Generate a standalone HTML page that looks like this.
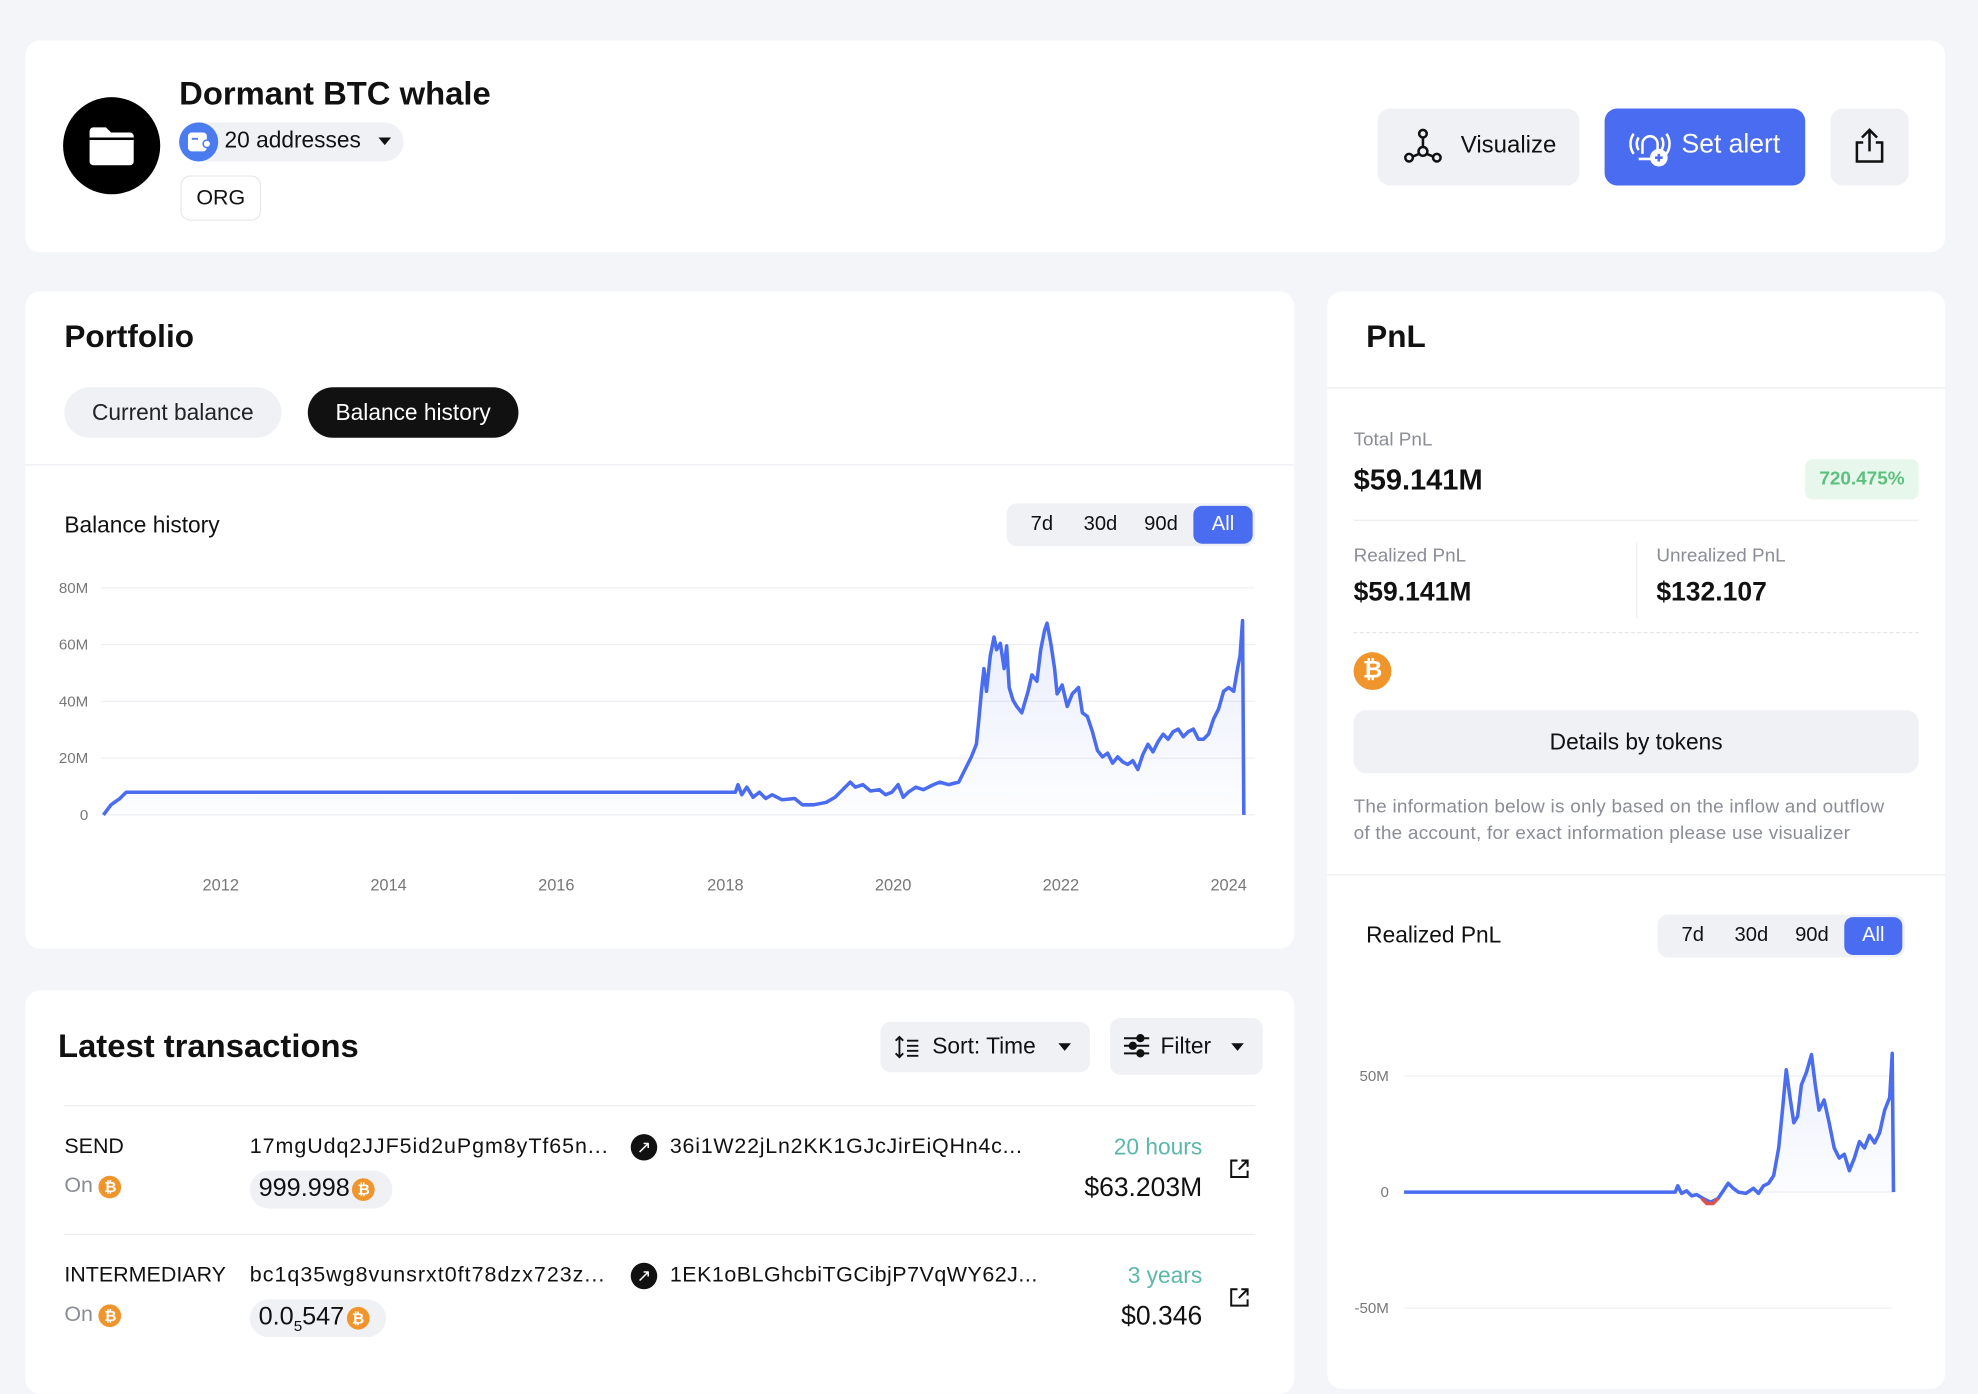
<!DOCTYPE html>
<html><head><meta charset="utf-8"><style>
*{box-sizing:border-box;margin:0;padding:0}
html,body{width:1978px;height:1360px;overflow:hidden;background:#f4f5f9;font-family:"Liberation Sans",sans-serif;color:#111}
#w{position:absolute;left:0;top:0;width:1568px;height:1078px;transform:scale(1.26148);transform-origin:0 0}
.a{position:absolute}
.card{position:absolute;background:#fff;border-radius:12px}
.btn{position:absolute;background:#f0f1f5;border-radius:10px}
.t{position:absolute;white-space:nowrap}
.btc{display:inline-block;width:18px;height:18px;border-radius:50%;background:#f0952c;color:#fff;font-size:12px;font-weight:bold;text-align:center;line-height:18px;vertical-align:middle}
.seg{position:absolute;background:#f0f1f5;border-radius:8px;height:34px;font-size:16px}
.seg span{position:absolute;top:8px}
.seg .on{position:absolute;top:2px;height:30px;background:#4a6cf0;border-radius:7px;color:#fff;text-align:center;line-height:30px}
.gray{color:#8a8d95}
.addr{letter-spacing:0.6px}
</style></head><body><div id="w">

<!-- header card -->
<div class="card" style="left:20px;top:32px;width:1522px;height:168px"></div>
<div class="a" style="left:50px;top:77px;width:77px;height:77px;border-radius:50%;background:#000"></div>
<svg class="a" style="left:70px;top:99px" width="37" height="33" viewBox="0 0 37 33"><path d="M4 2h10l4 4h15a3 3 0 0 1 3 3v20a3 3 0 0 1-3 3H4a3 3 0 0 1-3-3V5a3 3 0 0 1 3-3z" fill="#fff"/><rect x="1" y="10" width="35" height="2" fill="#000"/></svg>
<div class="t" style="left:142px;top:59px;font-size:26px;font-weight:bold">Dormant BTC whale</div>
<div class="a" style="left:142px;top:97px;width:178px;height:31px;border-radius:16px;background:#f0f1f5"></div>
<div class="a" style="left:142px;top:97px;width:31px;height:31px;border-radius:50%;background:#4a7cf0"></div>
<svg class="a" style="left:148px;top:104px" width="20" height="17" viewBox="0 0 20 17"><rect x="1" y="1" width="15" height="15" rx="3" fill="#fff"/><path d="M4 6h5" stroke="#4a7cf0" stroke-width="1.5"/><circle cx="16" cy="10" r="3" fill="#fff" stroke="#4a7cf0" stroke-width="1.2"/></svg>
<div class="t" style="left:178px;top:101px;font-size:18px">20 addresses</div>
<div class="a" style="left:300px;top:109px;border-left:5px solid transparent;border-right:5px solid transparent;border-top:6px solid #111"></div>
<div class="a" style="left:143px;top:139px;width:64px;height:36px;border:1px solid #e8e9ed;border-radius:8px;font-size:17px;text-align:center;line-height:34px">ORG</div>

<div class="btn" style="left:1092px;top:86px;width:160px;height:61px"></div>
<svg class="a" style="left:1112px;top:101px" width="32" height="30" viewBox="0 0 32 30" fill="none" stroke="#111" stroke-width="2"><circle cx="16" cy="5" r="3"/><circle cx="5" cy="24" r="3"/><circle cx="27" cy="24" r="3"/><circle cx="16" cy="19" r="3.5"/><path d="M16 8v7.5M13 21l-5 2M19 21l5 2"/></svg>
<div class="t" style="left:1158px;top:105px;font-size:19px">Visualize</div>
<div class="a" style="left:1272px;top:86px;width:159px;height:61px;border-radius:10px;background:#4a6cf0"></div>
<svg class="a" style="left:1290px;top:100px" width="36" height="34" viewBox="0 0 36 34" fill="none" stroke="#fff" stroke-width="2"><path d="M5 6a14 14 0 0 0 0 16M9 9a9 9 0 0 0 0 10M31 6a14 14 0 0 1 0 16M27 9a9 9 0 0 1 0 10"/><path d="M12 22v-8a6 6 0 0 1 12 0v6"/><path d="M9 26h10"/><circle cx="25" cy="25" r="6" fill="#fff"/><path d="M25 22v6M22 25h6" stroke="#4a6cf0"/></svg>
<div class="t" style="left:1333px;top:103px;font-size:21px;color:#fff">Set alert</div>
<div class="btn" style="left:1451px;top:86px;width:62px;height:61px"></div>
<svg class="a" style="left:1468px;top:101px" width="28" height="30" viewBox="0 0 28 30" fill="none" stroke="#111" stroke-width="2"><path d="M14 2v17M8 8l6-6 6 6"/><path d="M9 12H4v15h20V12h-5"/></svg>

<!-- portfolio card -->
<div class="card" style="left:20px;top:231px;width:1006px;height:521px"></div>
<div class="t" style="left:51px;top:253px;font-size:25px;font-weight:bold">Portfolio</div>
<div class="a" style="left:51px;top:307px;width:172px;height:40px;border-radius:20px;background:#f0f1f5;font-size:18px;text-align:center;line-height:40px;color:#222">Current balance</div>
<div class="a" style="left:244px;top:307px;width:167px;height:40px;border-radius:20px;background:#111;font-size:18px;text-align:center;line-height:40px;color:#fff">Balance history</div>
<div class="a" style="left:20px;top:368px;width:1006px;height:1px;background:#eceef2"></div>
<div class="t" style="left:51px;top:406px;font-size:18px">Balance history</div>
<div class="seg" style="left:798px;top:399px;width:197px"><span style="left:19px">7d</span><span style="left:61px">30d</span><span style="left:109px">90d</span><div class="on" style="left:148px;width:47px">All</div></div>

<svg class="a" style="left:0;top:440px" width="1026" height="290" viewBox="0 440 1026 290">
<g stroke="#eef0f3" stroke-width="1"><path d="M80 466H995M80 511H995M80 556H995M80 601H995M80 646H995"/></g>
<g font-family="Liberation Sans" font-size="12" fill="#777" text-anchor="end"><text x="70" y="470">80M</text><text x="70" y="515">60M</text><text x="70" y="560">40M</text><text x="70" y="605">20M</text><text x="70" y="650">0</text></g>
<g font-family="Liberation Sans" font-size="13" fill="#777" text-anchor="middle"><text x="175" y="706">2012</text><text x="308" y="706">2014</text><text x="441" y="706">2016</text><text x="575" y="706">2018</text><text x="708" y="706">2020</text><text x="841" y="706">2022</text><text x="974" y="706">2024</text></g>
<defs><linearGradient id="g1" x1="0" y1="0" x2="0" y2="1"><stop offset="0" stop-color="#4a6cf0" stop-opacity="0.12"/><stop offset="1" stop-color="#4a6cf0" stop-opacity="0.01"/></linearGradient></defs>
<path d="M82 646L88 638L95 633L100 628L583 628L585 622L588 630L592 624L597 632L602 628L607 633L612 630L620 634L630 633L636 638L645 638L655 636L662 632L668 626L674 620L678 624L684 622L690 627L697 626L702 630L707 628L712 622L716 632L720 628L726 624L732 626L740 622L745 620L752 622L760 620L765 610L770 600L774 590L776 570L778 548L780 530L782 548L785 520L788 505L790 515L793 510L796 530L798 512L800 545L803 555L806 560L810 565L815 548L818 535L822 540L825 515L828 500L830 494L833 510L836 530L838 550L842 543L846 560L850 550L855 545L858 565L862 568L866 580L870 595L874 600L878 597L882 605L886 600L890 604L894 606L898 603L902 610L906 598L910 590L914 596L918 588L922 582L926 586L930 580L934 578L938 584L942 580L946 578L950 586L954 586L958 582L962 570L966 562L970 548L974 545L978 548L981 530L983 520L985 492L986 646" fill="url(#g1)" stroke="#4a6cf0" stroke-width="2.8" stroke-linejoin="round"/>
</svg>

<!-- transactions card -->
<div class="card" style="left:20px;top:785px;width:1006px;height:320px"></div>
<div class="t" style="left:46px;top:814px;font-size:26px;font-weight:bold">Latest transactions</div>
<div class="btn" style="left:698px;top:810px;width:166px;height:40px;border-radius:8px"></div>
<svg class="a" style="left:708px;top:820px" width="22" height="20" viewBox="0 0 22 20" fill="none" stroke="#111" stroke-width="1.8"><path d="M5 2v16M2 5l3-3 3 3M2 15l3 3 3-3M11 5h9M11 9h9M11 13h9M11 17h9" stroke-width="1.5"/></svg>
<div class="t" style="left:739px;top:819px;font-size:18px">Sort: Time</div>
<div class="a" style="left:839px;top:827px;border-left:5px solid transparent;border-right:5px solid transparent;border-top:6px solid #111"></div>
<div class="btn" style="left:880px;top:807px;width:121px;height:45px;border-radius:8px"></div>
<svg class="a" style="left:890px;top:819px" width="22" height="20" viewBox="0 0 22 20" stroke="#111" stroke-width="1.6"><path d="M1 4h20M1 10h20M1 16h20"/><circle cx="14" cy="4" r="2.5" fill="#111"/><circle cx="8" cy="10" r="2.5" fill="#111"/><circle cx="14" cy="16" r="2.5" fill="#111"/></svg>
<div class="t" style="left:920px;top:819px;font-size:18px">Filter</div>
<div class="a" style="left:976px;top:827px;border-left:5px solid transparent;border-right:5px solid transparent;border-top:6px solid #111"></div>

<div class="a" style="left:51px;top:876px;width:944px;height:1px;background:#eceef2"></div>
<div class="t" style="left:51px;top:899px;font-size:17px">SEND</div>
<div class="t gray" style="left:51px;top:930px;font-size:17px">On <span class="btc">₿</span></div>
<div class="t addr" style="left:198px;top:899px;font-size:17px;letter-spacing:0.75px">17mgUdq2JJF5id2uPgm8yTf65n...</div>
<div class="a" style="left:500px;top:899px;width:21px;height:21px;border-radius:50%;background:#111;color:#fff;font-size:14px;text-align:center;line-height:21px">↗</div>
<div class="t addr" style="left:531px;top:899px;font-size:17px">36i1W22jLn2KK1GJcJirEiQHn4c...</div>
<div class="t" style="right:615px;top:899px;font-size:18px;color:#5bb8a8">20 hours</div>
<div class="a" style="left:198px;top:928px;width:113px;height:30px;border-radius:15px;background:#f0f1f5"></div>
<div class="t" style="left:205px;top:931px;font-size:20px">999.998<span class="btc" style="margin-left:2px">₿</span></div>
<div class="t" style="right:615px;top:930px;font-size:21px">$63.203M</div>
<svg class="a" style="left:974px;top:918px" width="17" height="17" viewBox="0 0 17 17" fill="none" stroke="#111" stroke-width="1.6"><path d="M7 2H2v13h13v-5M10 2h5v5M15 2L8 9"/></svg>

<div class="a" style="left:51px;top:978px;width:944px;height:1px;background:#eceef2"></div>
<div class="t" style="left:51px;top:1001px;font-size:17px">INTERMEDIARY</div>
<div class="t gray" style="left:51px;top:1032px;font-size:17px">On <span class="btc">₿</span></div>
<div class="t addr" style="left:198px;top:1001px;font-size:17px;letter-spacing:0.8px">bc1q35wg8vunsrxt0ft78dzx723z...</div>
<div class="a" style="left:500px;top:1001px;width:21px;height:21px;border-radius:50%;background:#111;color:#fff;font-size:14px;text-align:center;line-height:21px">↗</div>
<div class="t addr" style="left:531px;top:1001px;font-size:17px;letter-spacing:0.4px">1EK1oBLGhcbiTGCibjP7VqWY62J...</div>
<div class="t" style="right:615px;top:1001px;font-size:18px;color:#5bb8a8">3 years</div>
<div class="a" style="left:198px;top:1030px;width:108px;height:30px;border-radius:15px;background:#f0f1f5"></div>
<div class="t" style="left:205px;top:1033px;font-size:20px">0.0<sub style="font-size:12px">5</sub>547<span class="btc" style="margin-left:2px">₿</span></div>
<div class="t" style="right:615px;top:1032px;font-size:21px">$0.346</div>
<svg class="a" style="left:974px;top:1020px" width="17" height="17" viewBox="0 0 17 17" fill="none" stroke="#111" stroke-width="1.6"><path d="M7 2H2v13h13v-5M10 2h5v5M15 2L8 9"/></svg>

<!-- PnL card -->
<div class="card" style="left:1052px;top:231px;width:490px;height:870px"></div>
<div class="t" style="left:1083px;top:253px;font-size:25px;font-weight:bold">PnL</div>
<div class="a" style="left:1052px;top:307px;width:490px;height:1px;background:#eceef2"></div>
<div class="t gray" style="left:1073px;top:340px;font-size:15px">Total PnL</div>
<div class="t" style="left:1073px;top:367px;font-size:23px;font-weight:bold">$59.141M</div>
<div class="a" style="left:1431px;top:364px;width:90px;height:32px;border-radius:6px;background:#e7f7ec;color:#5ec07f;font-size:15px;font-weight:bold;text-align:center;line-height:32px">720.475%</div>
<div class="a" style="left:1073px;top:412px;width:448px;height:1px;background:#eceef2"></div>
<div class="t gray" style="left:1073px;top:432px;font-size:15px">Realized PnL</div>
<div class="t" style="left:1073px;top:458px;font-size:21px;font-weight:bold">$59.141M</div>
<div class="a" style="left:1297px;top:430px;width:1px;height:60px;background:#eceef2"></div>
<div class="t gray" style="left:1313px;top:432px;font-size:15px">Unrealized PnL</div>
<div class="t" style="left:1313px;top:458px;font-size:21px;font-weight:bold">$132.107</div>
<div class="a" style="left:1073px;top:501px;width:448px;border-top:1px dashed #e4e6ea"></div>
<div class="a" style="left:1073px;top:517px;width:30px;height:30px;border-radius:50%;background:#f0952c;color:#fff;font-size:19px;font-weight:bold;text-align:center;line-height:30px">₿</div>
<div class="a" style="left:1073px;top:563px;width:448px;height:50px;border-radius:10px;background:#f0f1f5;font-size:18px;text-align:center;line-height:50px">Details by tokens</div>
<div class="t gray" style="left:1073px;top:629px;font-size:15px;line-height:21px;letter-spacing:0.2px">The information below is only based on the inflow and outflow<br>of the account, for exact information please use visualizer</div>
<div class="a" style="left:1052px;top:693px;width:490px;height:1px;background:#eceef2"></div>
<div class="t" style="left:1083px;top:731px;font-size:18px">Realized PnL</div>
<div class="seg" style="left:1314px;top:725px;width:196px"><span style="left:19px">7d</span><span style="left:61px">30d</span><span style="left:109px">90d</span><div class="on" style="left:148px;width:46px">All</div></div>
<svg class="a" style="left:1052px;top:800px" width="490" height="278" viewBox="1052 800 490 278">
<g stroke="#eef0f3"><path d="M1113 853H1500M1113 945H1500M1113 1037H1500"/></g>
<g font-family="Liberation Sans" font-size="12" fill="#777" text-anchor="end"><text x="1101" y="857">50M</text><text x="1101" y="949">0</text><text x="1101" y="1041">-50M</text></g>
<defs><linearGradient id="g2" x1="0" y1="0" x2="0" y2="1"><stop offset="0" stop-color="#4a6cf0" stop-opacity="0.1"/><stop offset="1" stop-color="#4a6cf0" stop-opacity="0.01"/></linearGradient></defs>
<path d="M1113 945L1328 945L1330 940L1333 946L1337 944L1341 948L1345 947L1350 950L1356 953L1362 950L1366 944L1370 938L1374 942L1378 945L1384 946L1390 942L1394 946L1398 940L1402 938L1406 932L1410 910L1413 880L1416 848L1419 870L1422 890L1425 885L1428 860L1432 850L1436 836L1439 860L1442 880L1446 872L1450 890L1454 910L1458 918L1462 915L1466 928L1470 918L1474 905L1478 910L1482 900L1486 906L1490 898L1494 880L1498 870L1500 835L1501 945" fill="url(#g2)" stroke="#4a6cf0" stroke-width="2.8" stroke-linejoin="round"/>
<path d="M1349 950L1353 954L1358 954L1362 950" fill="none" stroke="#d9534f" stroke-width="2.8"/>
</svg>

</div></body></html>
